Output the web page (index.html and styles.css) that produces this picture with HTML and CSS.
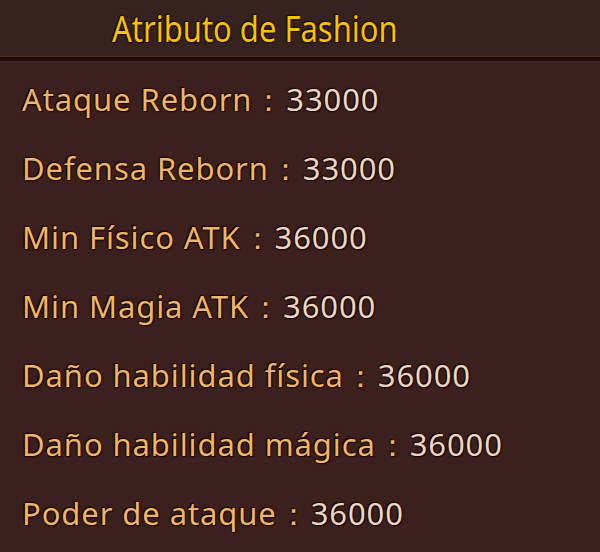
FILE: index.html
```html
<!DOCTYPE html>
<html>
<head>
<meta charset="utf-8">
<link rel="stylesheet" href="styles.css">
</head>
<body>
<div class="panel">
  <header class="head"><h1 class="title">Atributo de Fashion</h1></header>
  <ul class="list">
    <li class="row"><span class="label">Ataque Reborn</span><span class="colon">：</span><span class="val">33000</span></li>
    <li class="row"><span class="label">Defensa Reborn</span><span class="colon">：</span><span class="val">33000</span></li>
    <li class="row"><span class="label">Min Físico ATK</span><span class="colon">：</span><span class="val">36000</span></li>
    <li class="row"><span class="label">Min Magia ATK</span><span class="colon">：</span><span class="val">36000</span></li>
    <li class="row"><span class="label">Daño habilidad física</span><span class="colon">：</span><span class="val">36000</span></li>
    <li class="row"><span class="label">Daño habilidad mágica</span><span class="colon">：</span><span class="val">36000</span></li>
    <li class="row"><span class="label">Poder de ataque</span><span class="colon">：</span><span class="val">36000</span></li>
  </ul>
</div>
</body>
</html>
```
FILE: styles.css
```css
html, body { margin: 0; padding: 0; }
body {
  width: 600px; height: 552px; overflow: hidden;
  background: #3c201d;
  font-family: "Noto Sans", "Open Sans", sans-serif;
}
.head {
  height: 56px;
  padding-left: 112px;
  background: #36221e;
  border-bottom: 1px solid #5a2a1e;
  box-shadow: 0 1px 0 #1a0c08, 0 2px 0 #1a0c08, 0 3px 0 #1f0f0b, 0 4px 0 #2a1511;
  display: flex; align-items: center; justify-content: flex-start;
}
.title {
  margin: 0; padding-top: 2px;
  font-size: 36px; font-weight: 400; line-height: 56px;
  color: #f7c300;
  transform: scaleX(0.86);
  transform-origin: left center;
  white-space: nowrap;
  text-shadow: 0 0 2px #1a0800, 1px 1px 1px #1a0800, -1px -1px 1px #1a0800;
}
.list {
  list-style: none; margin: 0; padding: 8px 0 0 22px;
}
.row {
  height: 69px; line-height: 69px;
  font-size: 31px; letter-spacing: 0.9px;
  text-shadow: 0 0 2px #150602, 1px 1px 1px #150602, -1px -1px 1px #150602;
}
.label, .colon { color: #f0b565; }
.colon { margin: 0 1px; }
.val { color: #ead6c2; }
```
